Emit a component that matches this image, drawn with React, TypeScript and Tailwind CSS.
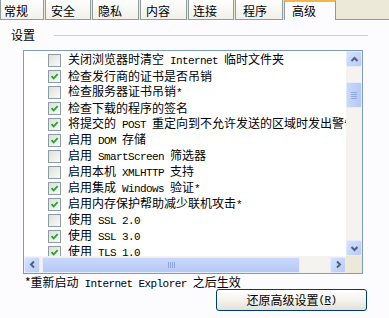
import React from "react";

const cjk = "font-['Noto_Sans_CJK_SC',sans-serif]";

// half-width latin run (SimSun style 6px advance)
function L({ children }: { children: React.ReactNode }) {
  return <span className="font-['Liberation_Mono',monospace] text-[11px] tracking-[-0.6px] whitespace-pre">{children}</span>;
}

const rows: { checked: boolean; label: React.ReactNode }[] = [
  { checked: false, label: <>关闭浏览器时清空<L> Internet </L>临时文件夹</> },
  { checked: true, label: <>检查发行商的证书是否吊销</> },
  { checked: false, label: <>检查服务器证书吊销<L>*</L></> },
  { checked: true, label: <>检查下载的程序的签名</> },
  { checked: true, label: <>将提交的<L> POST </L>重定向到不允许发送的区域时发出警告</> },
  { checked: true, label: <>启用<L> DOM </L>存储</> },
  { checked: false, label: <>启用<L> SmartScreen </L>筛选器</> },
  { checked: false, label: <>启用本机<L> XMLHTTP </L>支持</> },
  { checked: true, label: <>启用集成<L> Windows </L>验证<L>*</L></> },
  { checked: true, label: <>启用内存保护帮助减少联机攻击<L>*</L></> },
  { checked: false, label: <>使用<L> SSL 2.0</L></> },
  { checked: true, label: <>使用<L> SSL 3.0</L></> },
  { checked: true, label: <>使用<L> TLS 1.0</L></> },
];

const tabs = [
  { name: "常规", w: "w-[44px]", pl: "pl-[3px]" },
  { name: "安全", w: "w-[46px]", pl: "pl-[5px]" },
  { name: "隐私", w: "w-[47px]", pl: "pl-[5px]" },
  { name: "内容", w: "w-[47px]", pl: "pl-[5px]" },
  { name: "连接", w: "w-[46px]", pl: "pl-[4px]" },
  { name: "程序", w: "w-[48px]", pl: "pl-[7px]" },
];

function CheckBox({ checked }: { checked: boolean }) {
  return (
    <div className="w-[13px] h-[13px] shrink-0 border border-[#8d9aa8] bg-gradient-to-br from-[#dedfd9] to-[#fbfbf8] flex items-center justify-center">
      {checked && (
        <svg width="9" height="9" viewBox="0 0 9 9">
          <path d="M1.5 4.2 L3.6 6.4 L7.6 2.2" fill="none" stroke="#2aa12a" strokeWidth="1.8" />
        </svg>
      )}
    </div>
  );
}

function Arrow({ dir }: { dir: "up" | "down" | "left" | "right" }) {
  const d = {
    up: "M1.5 6 L4.5 3 L7.5 6",
    down: "M1.5 3 L4.5 6 L7.5 3",
    left: "M6 1.5 L3 4.5 L6 7.5",
    right: "M3 1.5 L6 4.5 L3 7.5",
  }[dir];
  return (
    <svg width="9" height="9" viewBox="0 0 9 9">
      <path d={d} fill="none" stroke="#4d6185" strokeWidth="2" />
    </svg>
  );
}

function ScrollButton({ dir }: { dir: "up" | "down" | "left" | "right" }) {
  return (
    <div className="w-[16px] h-[16px] shrink-0 rounded-[2px] border border-[#e4ebfb] bg-gradient-to-br from-[#d6e2fd] to-[#b8caf5] flex items-center justify-center">
      <Arrow dir={dir} />
    </div>
  );
}

export default function App() {
  return (
    <div className={`w-[389px] h-[318px] bg-[#fcfcfe] overflow-hidden flex flex-col text-[12px] leading-[16px] text-black ${cjk}`}>
      {/* tab strip */}
      <div className="flex h-[20px] bg-[#ece9d8] shrink-0">
        {tabs.map((t) => (
          <div key={t.name} className={`${t.w} ${t.pl} mr-[1px] h-full pt-[3px] border-x border-b border-[#919b9c] bg-gradient-to-b from-[#fefefe] to-[#f1f0ea]`}>
            {t.name}
          </div>
        ))}
        <div className="w-[52px] h-full pl-[7px] pt-[1px] border-x border-[#919b9c] border-t-[2px] border-t-[#f2b64a] bg-[#fcfcfe]">
          高级
        </div>
        <div className="flex-1 border-b border-[#919b9c]" />
      </div>

      {/* group label */}
      <div className="flex items-center h-[16px] mt-[7px] pl-[11px] pr-[21px]">
        <span>设置</span>
        <div className="flex-1 h-px bg-[#d0d0bf] ml-[19px]" />
      </div>

      {/* list box */}
      <div className="ml-[23px] mt-[7px] w-[340px] h-[224px] border border-[#7f9db9] bg-white flex flex-col">
        <div className="flex h-[205px]">
          <div className="w-[322px] h-full overflow-hidden pt-[1px]">
            {rows.map((r, i) => (
              <div key={i} className="flex items-center h-[16px] pl-[24px] gap-[7px] whitespace-nowrap">
                <CheckBox checked={r.checked} />
                <span>{r.label}</span>
              </div>
            ))}
          </div>
          <div className="w-[16px] h-full bg-[#f4f3ef] flex flex-col">
            <ScrollButton dir="up" />
            <div className="mt-[15px] h-[26px] rounded-[2px] border border-[#e4ebfb] bg-gradient-to-r from-[#c9d8fc] to-[#b6c8f4] flex flex-col items-center justify-center gap-[1px]">
              <div className="w-[6px] h-px bg-[#8ea6e2]" />
              <div className="w-[6px] h-px bg-[#8ea6e2]" />
              <div className="w-[6px] h-px bg-[#8ea6e2]" />
              <div className="w-[6px] h-px bg-[#8ea6e2]" />
            </div>
            <div className="flex-1" />
            <ScrollButton dir="down" />
          </div>
        </div>
        <div className="flex h-[17px]">
          <div className="w-[322px] h-full bg-[#f4f3ef] flex items-center">
            <ScrollButton dir="left" />
            <div className="ml-[2px] w-[258px] h-[16px] rounded-[2px] border border-[#e4ebfb] bg-gradient-to-b from-[#c9d8fc] to-[#b6c8f4] flex items-center justify-center gap-[1px]">
              <div className="w-px h-[6px] bg-[#8ea6e2]" />
              <div className="w-px h-[6px] bg-[#8ea6e2]" />
              <div className="w-px h-[6px] bg-[#8ea6e2]" />
              <div className="w-px h-[6px] bg-[#8ea6e2]" />
            </div>
            <div className="flex-1" />
            <ScrollButton dir="right" />
          </div>
          <div className="w-[16px] h-full bg-[#ece9d8]" />
        </div>
      </div>

      {/* footer note */}
      <div className="pl-[25px] h-[15px] leading-[15px] whitespace-nowrap">
        *重新启动<L> Internet Explorer </L>之后生效
      </div>

      {/* reset button */}
      <button className="ml-[216px] w-[151px] h-[22px] rounded-[3px] border border-[#003c74] bg-gradient-to-b from-[#ffffff] via-[#f4f3ee] to-[#e3e1d6] flex items-center justify-center leading-[14px]">
        还原高级设置<L>(</L><L><span className="underline">R</span></L><L>)</L>
      </button>
    </div>
  );
}
